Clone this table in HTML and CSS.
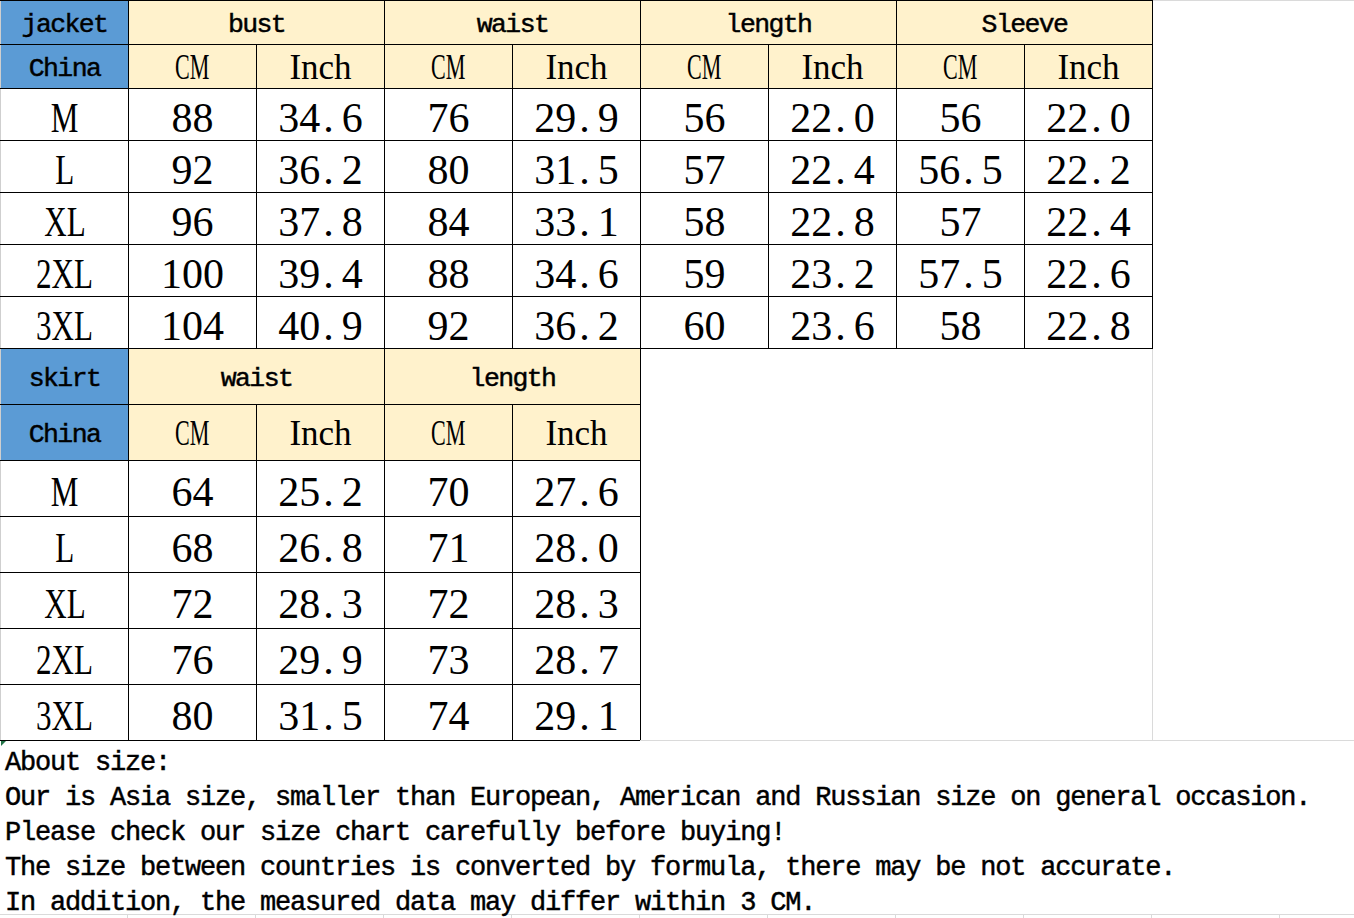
FILE: index.html
```html
<!DOCTYPE html>
<html>
<head>
<meta charset="utf-8">
<title>Size chart</title>
<link rel="stylesheet" href="styles.css">
</head>
<body>
<div class="sheet">
  <div class="top">
    <table class="chart">
      <colgroup>
        <col class="c"><col class="c"><col class="c"><col class="c"><col class="c"><col class="c"><col class="c"><col class="c"><col class="c">
      </colgroup>
      <tr class="h1">
        <td class="blue hd first">jacket</td>
        <td class="cream hd" colspan="2">bust</td>
        <td class="cream hd" colspan="2">waist</td>
        <td class="cream hd" colspan="2">length</td>
        <td class="cream hd" colspan="2">Sleeve</td>
      </tr>
      <tr class="h2">
        <td class="blue hd first">China</td>
        <td class="cream unit"><span class="cm">CM</span></td><td class="cream unit">Inch</td>
        <td class="cream unit"><span class="cm">CM</span></td><td class="cream unit">Inch</td>
        <td class="cream unit"><span class="cm">CM</span></td><td class="cream unit">Inch</td>
        <td class="cream unit"><span class="cm">CM</span></td><td class="cream unit">Inch</td>
      </tr>
      <tr class="d">
        <td class="num first"><span class="lbl">M</span></td>
        <td class="num">88</td><td class="num">34<span class="p">.</span>6</td>
        <td class="num">76</td><td class="num">29<span class="p">.</span>9</td>
        <td class="num">56</td><td class="num">22<span class="p">.</span>0</td>
        <td class="num">56</td><td class="num">22<span class="p">.</span>0</td>
      </tr>
      <tr class="d">
        <td class="num first"><span class="lbl">L</span></td>
        <td class="num">92</td><td class="num">36<span class="p">.</span>2</td>
        <td class="num">80</td><td class="num">31<span class="p">.</span>5</td>
        <td class="num">57</td><td class="num">22<span class="p">.</span>4</td>
        <td class="num">56<span class="p">.</span>5</td><td class="num">22<span class="p">.</span>2</td>
      </tr>
      <tr class="d">
        <td class="num first"><span class="lbl">XL</span></td>
        <td class="num">96</td><td class="num">37<span class="p">.</span>8</td>
        <td class="num">84</td><td class="num">33<span class="p">.</span>1</td>
        <td class="num">58</td><td class="num">22<span class="p">.</span>8</td>
        <td class="num">57</td><td class="num">22<span class="p">.</span>4</td>
      </tr>
      <tr class="d">
        <td class="num first"><span class="lbl">2XL</span></td>
        <td class="num">100</td><td class="num">39<span class="p">.</span>4</td>
        <td class="num">88</td><td class="num">34<span class="p">.</span>6</td>
        <td class="num">59</td><td class="num">23<span class="p">.</span>2</td>
        <td class="num">57<span class="p">.</span>5</td><td class="num">22<span class="p">.</span>6</td>
      </tr>
      <tr class="d">
        <td class="num first"><span class="lbl">3XL</span></td>
        <td class="num">104</td><td class="num">40<span class="p">.</span>9</td>
        <td class="num">92</td><td class="num">36<span class="p">.</span>2</td>
        <td class="num">60</td><td class="num">23<span class="p">.</span>6</td>
        <td class="num">58</td><td class="num">22<span class="p">.</span>8</td>
      </tr>
      <tr class="s">
        <td class="blue hd first">skirt</td>
        <td class="cream hd" colspan="2">waist</td>
        <td class="cream hd" colspan="2">length</td>
        <td class="blank" colspan="4" rowspan="7"></td>
      </tr>
      <tr class="s">
        <td class="blue hd first">China</td>
        <td class="cream unit sk"><span class="cm">CM</span></td><td class="cream unit sk">Inch</td>
        <td class="cream unit sk"><span class="cm">CM</span></td><td class="cream unit sk">Inch</td>
      </tr>
      <tr class="s">
        <td class="num sn first"><span class="lbl">M</span></td>
        <td class="num sn">64</td><td class="num sn">25<span class="p">.</span>2</td>
        <td class="num sn">70</td><td class="num sn">27<span class="p">.</span>6</td>
      </tr>
      <tr class="s">
        <td class="num sn first"><span class="lbl">L</span></td>
        <td class="num sn">68</td><td class="num sn">26<span class="p">.</span>8</td>
        <td class="num sn">71</td><td class="num sn">28<span class="p">.</span>0</td>
      </tr>
      <tr class="s">
        <td class="num sn first"><span class="lbl">XL</span></td>
        <td class="num sn">72</td><td class="num sn">28<span class="p">.</span>3</td>
        <td class="num sn">72</td><td class="num sn">28<span class="p">.</span>3</td>
      </tr>
      <tr class="s">
        <td class="num sn first"><span class="lbl">2XL</span></td>
        <td class="num sn">76</td><td class="num sn">29<span class="p">.</span>9</td>
        <td class="num sn">73</td><td class="num sn">28<span class="p">.</span>7</td>
      </tr>
      <tr class="s">
        <td class="num sn first"><span class="lbl">3XL</span></td>
        <td class="num sn">80</td><td class="num sn">31<span class="p">.</span>5</td>
        <td class="num sn">74</td><td class="num sn">29<span class="p">.</span>1</td>
      </tr>
    </table>
    <div class="fill"></div>
  </div>
  <div class="notes">About size:
Our is Asia size, smaller than European, American and Russian size on general occasion.
Please check our size chart carefully before buying!
The size between countries is converted by formula, there may be not accurate.
In addition, the measured data may differ within 3 CM.</div>
  <div class="grid">
    <div class="gc"></div><div class="gc"></div><div class="gc"></div><div class="gc"></div><div class="gc"></div><div class="gc"></div><div class="gc"></div><div class="gc"></div><div class="gc"></div><div class="gc"></div><div class="gc"></div>
  </div>
</div>
</body>
</html>
```

FILE: styles.css
```css
html, body {
  margin: 0;
  padding: 0;
  background: #ffffff;
  overflow: hidden;
}

.sheet {
  width: 1354px;
  color: #000;
}

.top {
  display: flex;
  align-items: stretch;
}

.chart {
  border-collapse: collapse;
  table-layout: fixed;
  flex: none;
}

.chart .c {
  width: 128px;
}

.chart td {
  border: 1px solid #000;
  padding: 0;
  text-align: center;
  vertical-align: middle;
  white-space: nowrap;
  overflow: hidden;
}

.chart td.first {
  border-left-color: #cfcfcf;
}

.h1, .h2 {
  height: 44px;
}

.d {
  height: 52px;
}

.s {
  height: 56px;
}

.blue {
  background: #5b9bd5;
}

.cream {
  background: #fff2cc;
}

.hd {
  font-family: "Liberation Mono", monospace;
  font-size: 26.5px;
  letter-spacing: -1.6px;
  line-height: 30px;
  -webkit-text-stroke: 0.45px #000;
  padding-top: 5px !important;
}

.unit {
  font-family: "Liberation Serif", serif;
  font-size: 35px;
  line-height: 38px;
  padding-top: 3px !important;
}

.cm {
  display: inline-block;
  transform: scaleX(0.63);
}

.num {
  font-family: "Liberation Serif", serif;
  font-size: 42px;
  line-height: 44px;
  padding-top: 6px !important;
}

.sn {
  padding-top: 7px !important;
}

.lbl {
  display: inline-block;
  transform: scaleX(0.74);
}

.p {
  margin: 0 8px 0 3px;
}

.chart td.blank {
  border-top-color: #000;
  border-left-color: #000;
  border-right-color: #dadada;
  border-bottom-color: #dadada;
  background: #fff;
}

.fill {
  flex: 1;
  border-top: 1px solid #dadada;
  border-bottom: 1px solid #dadada;
}

.notes {
  position: relative;
  box-sizing: border-box;
  height: 174px;
  padding: 5px 0 0 5px;
  border-bottom: 1px solid #dadada;
  font-family: "Liberation Mono", monospace;
  font-size: 27px;
  letter-spacing: -1.2px;
  line-height: 35px;
  -webkit-text-stroke: 0.45px #000;
  white-space: pre;
}

.notes::before {
  content: "";
  position: absolute;
  left: 1px;
  top: 0;
  border-top: 5px solid #217346;
  border-right: 5px solid transparent;
}

.grid {
  display: flex;
  height: 20px;
}

.gc {
  flex: none;
  width: 128px;
  box-sizing: border-box;
  border-right: 1px solid #dadada;
}
```
